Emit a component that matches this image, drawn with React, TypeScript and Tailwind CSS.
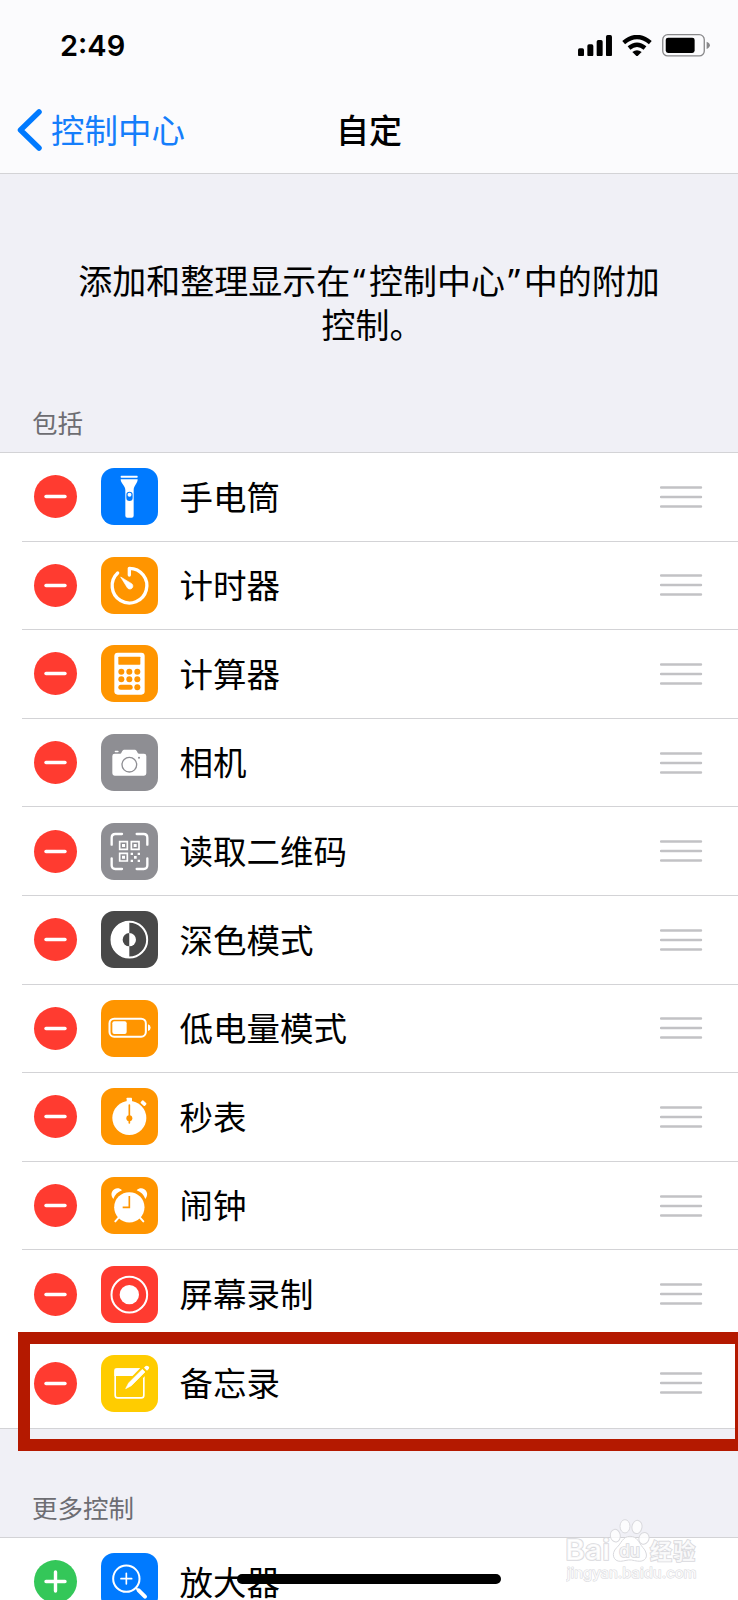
import React from "react";

interface ControlItem {
  name: string;
  color: string;
  icon: React.ReactNode;
}

const FlashlightIcon = () => (
  <g fill="#fff">
    <rect x="59" y="23" width="51" height="6" rx="2" />
    <path d="M59 34h51c0 13-12 18-12 32v77q0 6-6 6H79q-6 0-6-6V66c0-14-14-19-14-32z" />
    <rect x="76" y="71" width="19" height="28" rx="9.5" fill="#007aff" />
    <circle cx="85.500" cy="80" r="6" />
  </g>
);

const TimerIcon = () => (
  <g>
    <path d="M85 54V34A52 52 0 1 1 50 48" fill="none" stroke="#fff" strokeWidth="10" strokeLinecap="round" strokeLinejoin="round" />
    <path d="M59 60L92 80A9 9 0 1 1 79 92z" fill="#fff" stroke="#fff" strokeWidth="2" strokeLinejoin="round" />
  </g>
);

const CalculatorIcon = () => (
  <g fill="#ff9500">
    <rect x="40" y="23" width="91" height="126" rx="10" fill="#fff" />
    <rect x="52" y="35" width="66" height="24" rx="2" />
    {[80, 103, 127].map((y) => (
      <g key={y}>
        {y !== 127 && <circle cx="61" cy={y} r="9" />}
        {y !== 127 && <circle cx="85" cy={y} r="9" />}
        <circle cx="109" cy={y} r="9" />
      </g>
    ))}
    <rect x="52" y="119.500" width="43" height="15" rx="7.500" />
  </g>
);

const CameraIcon = () => (
  <g fill="#fff">
    <path d="M41 59h17c4 0 5-12 11-12h33c6 0 7 12 12 12h15q7 0 7 7v52q0 7-7 7H41q-7 0-7-7V66q0-7 7-7z" />
    <rect x="41" y="50" width="12" height="5" rx="2.500" />
    <circle cx="85" cy="92" r="22" fill="none" stroke="#8e8e93" strokeWidth="4" />
    <circle cx="114" cy="71" r="3" fill="#8e8e93" />
  </g>
);

const QrIcon = () => (
  <g fill="none" stroke="#fff">
    <path
      d="M32 65V44Q32 33 43 33H63M107 33H128Q139 33 139 44V65M139 106V127Q139 138 128 138H107M63 138H43Q32 138 32 127V106"
      strokeWidth="7"
      strokeLinecap="round"
    />
    <path d="M56 56h23v23H56zM91 56h23v23H91zM56 91h23v23H56z" strokeWidth="5" />
    <path d="M63 63h9v9h-9zM98 63h9v9h-9zM63 98h9v9h-9zM89 89h7v7h-7zM110 89h7v7h-7zM99 99h8v8h-8zM89 110h7v7h-7zM110 110h7v7h-7z" fill="#fff" stroke="none" />
  </g>
);

const DarkModeIcon = () => (
  <g>
    <circle cx="85" cy="86" r="53.500" fill="none" stroke="#fff" strokeWidth="6" />
    <path d="M85 31a55 55 0 0 0 0 110z" fill="#fff" />
    <path d="M85 66a20 20 0 0 0 0 40z" fill="#484848" />
    <path d="M85 66a20 20 0 0 1 0 40z" fill="#fff" />
  </g>
);

const LowPowerIcon = () => (
  <g fill="#fff">
    <rect x="25.500" y="56" width="109" height="54" rx="14" fill="none" stroke="#fff" strokeWidth="6" />
    <rect x="34" y="64" width="43" height="38" rx="6" />
    <path d="M141 73q8 3 8 10t-8 10z" />
  </g>
);

const StopwatchIcon = () => (
  <g fill="#fff">
    <circle cx="85" cy="90" r="51" />
    <rect x="77" y="29" width="16" height="16" rx="2" />
    <rect x="119" y="40" width="17" height="11" rx="3" transform="rotate(42 127.500 45.500)" />
    <path d="M85 51V105" stroke="#ff9500" strokeWidth="5" strokeLinecap="round" />
    <circle cx="85" cy="91" r="9" fill="#ff9500" />
  </g>
);

const AlarmIcon = () => (
  <g fill="#fff">
    <circle cx="85" cy="91" r="45.500" />
    <path d="M37 66C20 46 46 23 63 40Q44 47 37 66zM133 66C150 46 124 23 107 40Q126 47 133 66z" />
    <path d="M53 122L43 133M117 122L127 133" stroke="#fff" strokeWidth="6" strokeLinecap="round" />
    <path d="M85 57V91H65" fill="none" stroke="#ff9500" strokeWidth="5" />
  </g>
);

const RecordIcon = () => (
  <g>
    <circle cx="85" cy="86" r="53.500" fill="none" stroke="#fff" strokeWidth="6" />
    <circle cx="85" cy="86" r="29" fill="#fff" />
  </g>
);

const NotesIcon = () => (
  <g fill="#fff">
    <rect x="42.500" y="42.500" width="86" height="86" rx="8" fill="none" stroke="#fff" strokeWidth="5" />
    <path d="M40 44q0-4 6-4h78v23H40z" />
    <path d="M70 105L79 79L130 27L150 46L96 98z" fill="#ffcc00" />
    <path d="M74 101L83 84L124 43L132 51L91 92z" stroke="#fff" strokeWidth="2" strokeLinejoin="round" />
    <path d="M129 38L133 34Q137 30 142 34T143 42L138 47z" />
  </g>
);

const MagnifierIcon = () => (
  <g fill="none" stroke="#fff" strokeLinecap="round">
    <circle cx="76" cy="77" r="39.500" strokeWidth="6" />
    <path d="M76 61V93M60 77H92" strokeWidth="5" />
    <path d="M106 106L112 112" strokeWidth="6" />
    <path d="M113 112L132 131" strokeWidth="12" />
  </g>
);

const included: ControlItem[] = [
  { name: "手电筒", color: "bg-[#007aff]", icon: <FlashlightIcon /> },
  { name: "计时器", color: "bg-[#ff9500]", icon: <TimerIcon /> },
  { name: "计算器", color: "bg-[#ff9500]", icon: <CalculatorIcon /> },
  { name: "相机", color: "bg-[#8e8e93]", icon: <CameraIcon /> },
  { name: "读取二维码", color: "bg-[#8e8e93]", icon: <QrIcon /> },
  { name: "深色模式", color: "bg-[#484848]", icon: <DarkModeIcon /> },
  { name: "低电量模式", color: "bg-[#ff9500]", icon: <LowPowerIcon /> },
  { name: "秒表", color: "bg-[#ff9500]", icon: <StopwatchIcon /> },
  { name: "闹钟", color: "bg-[#ff9500]", icon: <AlarmIcon /> },
  { name: "屏幕录制", color: "bg-[#ff3b30]", icon: <RecordIcon /> },
  { name: "备忘录", color: "bg-[#ffcc00]", icon: <NotesIcon /> },
];

const more: ControlItem[] = [{ name: "放大器", color: "bg-[#007aff]", icon: <MagnifierIcon /> }];

interface ControlRowProps {
  item: ControlItem;
  added: boolean;
  last: boolean;
}

const ControlRow: React.FC<ControlRowProps> = ({ item, added, last }) => {
  return (
    <li className="h-[88.6px] pl-[22px]">
      <div className={`flex h-full items-center pl-3 pr-[35px] ${last ? "" : "border-b border-[#d3d3d6]"}`}>
        <button className={`flex size-[43px] shrink-0 items-center justify-center rounded-full ${added ? "bg-[#ff3b30]" : "bg-[#34c759]"}`}>
          <svg viewBox="0 0 43 43" className="size-[43px]" stroke="#fff" strokeWidth="3.4" strokeLinecap="round">
            <path d={added ? "M12 21.500H31" : "M12 21.500H31M21.500 12V31"} />
          </svg>
        </button>
        <div className={`ml-[23.6px] size-[57px] shrink-0 rounded-[13px] ${item.color}`}>
          <svg viewBox="0 0 171 171" className="size-[57px]">
            {item.icon}
          </svg>
        </div>
        <span className="ml-[22px] flex-1 pb-[3px] text-[33.5px] leading-none">{item.name}</span>
        {added && (
          <svg viewBox="0 0 43 24" className="h-6 w-[43px]" stroke="#c2c2c5" strokeWidth="2.4" strokeLinecap="round">
            <path d="M1 2.500H41M1 12H41M1 21.500H41" />
          </svg>
        )}
      </div>
    </li>
  );
};

const StatusBar = () => (
  <div className="flex h-[91px] items-center justify-between pl-[60px] pr-[28px]">
    <span className="font-[Inter] text-[29px] font-semibold leading-none">2:49</span>
    <div className="flex items-center gap-[10px]">
      <svg viewBox="0 0 102 64" className="h-[21.3px] w-[34px]">
        <rect x="0" y="40" width="18" height="24" rx="5" />
        <rect x="28" y="28" width="18" height="36" rx="5" />
        <rect x="56" y="15" width="18" height="49" rx="5" />
        <rect x="84" y="0" width="18" height="64" rx="5" />
      </svg>
      <svg viewBox="0 0 90 64" className="h-[21.3px] w-[30px]">
        <path d="M5 23Q45-11 85 23M21 39Q45 19 69 39" fill="none" stroke="#000" strokeWidth="13" />
        <path d="M31 51Q45 40 59 51L45 65z" />
      </svg>
      <svg viewBox="0 0 144 68" className="h-[22.6px] w-[48px]">
        <rect x="2" y="2" width="125" height="64" rx="15" fill="none" stroke="#88888a" strokeWidth="4" />
        <rect x="11" y="11" width="87" height="46" rx="7" />
        <path d="M134 23q10 4 10 11t-10 11z" fill="#88888a" />
      </svg>
    </div>
  </div>
);

const Watermark = () => (
  <svg viewBox="0 0 400 190" className="absolute right-[39px] top-[1519px] h-[63.3px] w-[133.3px]" fill="#fff" fillOpacity="0.8" stroke="#d9d9dd" strokeWidth="3">
    <ellipse cx="148" cy="50" rx="15" ry="19" transform="rotate(-10 148 50)" />
    <ellipse cx="177" cy="22" rx="15" ry="20" />
    <ellipse cx="213" cy="24" rx="15" ry="20" transform="rotate(10 213 24)" />
    <ellipse cx="234" cy="58" rx="15" ry="18" transform="rotate(20 234 58)" />
    <path d="M192 52C170 52 166 74 152 86C134 104 142 128 164 127C176 126 184 122 196 123C210 126 220 128 228 126C248 120 243 98 230 85C218 70 214 52 192 52z" />
    <g className="font-[Inter]" paintOrder="stroke" strokeWidth="5">
      <text x="-2" y="124" fontSize="87" fontWeight="600" textLength="134" lengthAdjust="spacingAndGlyphs">
        Bai
      </text>
      <text x="160" y="115" fontSize="50" fontWeight="500" textLength="62" lengthAdjust="spacingAndGlyphs">
        du
      </text>
      <text x="252" y="120" fontSize="66" fontWeight="700" textLength="136" fontFamily="Noto Sans CJK SC">
        经验
      </text>
      <text x="2" y="177" fontSize="44" fontWeight="500" textLength="390" strokeWidth="3">
        jingyan.baidu.com
      </text>
    </g>
  </svg>
);

const App: React.FC = () => {
  return (
    <div className="relative h-[1600px] w-[738px] overflow-hidden bg-[#f0f0f6] font-['Noto_Sans_CJK_SC',sans-serif] text-black">
      <header className="h-[174px] border-b-[1.5px] border-[#d3d3d6] bg-[#fbfbfd]">
        <StatusBar />
        <nav className="grid h-[76px] grid-cols-3 items-center text-[33.5px] leading-none">
          <button className="flex items-center gap-[9px] pl-[17px] text-[#157efb]">
            <svg viewBox="0 0 25 42" className="mt-[2px] h-[42px] w-[25px] shrink-0" fill="none" stroke="#007aff" strokeWidth="5.500" strokeLinecap="round" strokeLinejoin="round">
              <path d="M22 3L3.500 21L22 39" />
            </svg>
            <span className="whitespace-nowrap">控制中心</span>
          </button>
          <h1 className="text-center text-[33px] font-medium">自定</h1>
        </nav>
      </header>

      <main>
        <p className="h-[213px] pt-[84px] text-center text-[34px] leading-[43.5px]">
          添加和整理显示在
          <span className="ml-[3px] mr-[3.5px] font-['Noto_Sans'] leading-none">“</span>
          控制中心
          <span className="ml-[3px] mr-[3.5px] font-['Noto_Sans'] leading-none">”</span>
          中的附加
          <br />
          <span className="pl-[7px]">控制。</span>
        </p>
        <h2 className="h-[65px] pl-8 pt-[22px] text-[25.5px] leading-[25px] text-[#6d6d72]">包括</h2>
        <ul className="border-y border-[#d3d3d6] bg-white">
          {included.map((item, i) => (
            <ControlRow key={item.name} item={item} added last={i === included.length - 1} />
          ))}
        </ul>
        <h2 className="h-[108px] pl-8 pt-[65px] text-[25.5px] leading-[25px] text-[#6d6d72]">更多控制</h2>
        <ul className="border-t border-[#d3d3d6] bg-white">
          {more.map((item) => (
            <ControlRow key={item.name} item={item} added={false} last />
          ))}
        </ul>
      </main>

      <div className="absolute left-[18px] top-[1332px] h-[119px] w-[729px] border-[12px] border-[#b41900]" />
      <Watermark />
      <div className="absolute left-[237px] top-[1574px] h-[10px] w-[264px] rounded-full bg-black" />
    </div>
  );
};

export default App;
